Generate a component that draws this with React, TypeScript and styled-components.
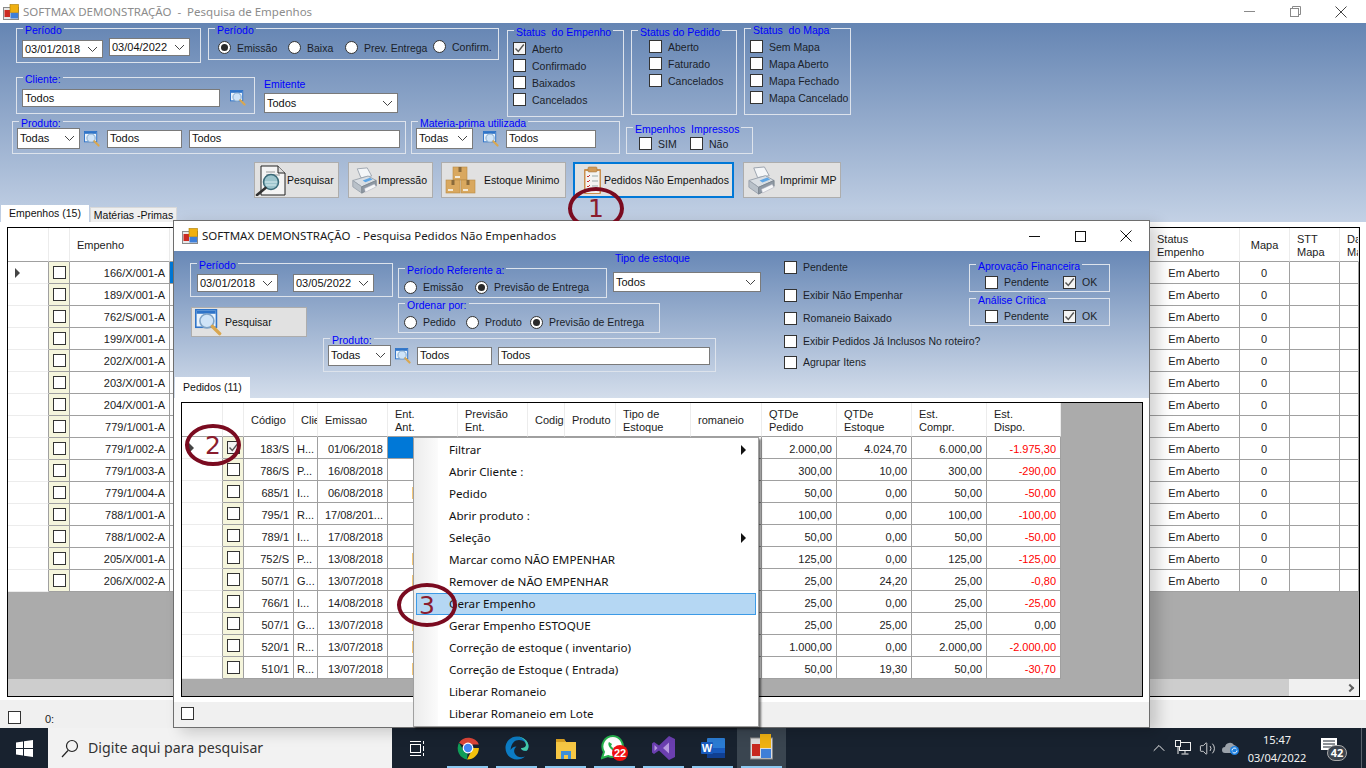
import React from "react";
import styled, { createGlobalStyle } from "styled-components";
import { ChevronUp, Volume2 } from "lucide-react";

const Global = createGlobalStyle`
  html, body { margin: 0; padding: 0; overflow: hidden; background: #fff; }
  * { box-sizing: border-box; }
  body { font: 11px/13px "Liberation Sans", Arial, sans-serif; color: #222; }
`;

const Screen = styled.div`position: relative; width: 1366px; height: 768px; overflow: hidden; display: flex; flex-direction: column;`;
const MainWindow = styled.div`height: 728px; display: flex; flex-direction: column; background: #fff;`;
const TitleBar = styled.div<{ $h: number; $inactive?: boolean }>`
  height: ${p => p.$h}px; flex: none; display: flex; align-items: center; background: #fff; position: relative; z-index: 2;
  padding-left: ${p => (p.$inactive ? 3 : 8)}px;
  color: ${p => (p.$inactive ? "#8c8c8c" : "#1a1a1a")};
`;
const TitleText = styled.span`font: 11.5px/16px "Noto Sans", sans-serif; white-space: pre; margin-left: 4px;`;
const WinControls = styled.div<{ $slot: number; $right: number }>`
  margin-left: auto; display: flex; margin-right: ${p => p.$right}px;
  & > span { width: ${p => p.$slot}px; display: flex; justify-content: center; align-items: center; }
`;
const Area = styled.div<{ $h: number; $from: string; $to: string }>`
  height: ${p => p.$h}px; flex: none; display: flex; flex-direction: column;
  background: linear-gradient(${p => p.$from}, ${p => p.$to});
`;
const Row = styled.div<{ $pl?: number; $mt?: number; $gap?: number; $h?: number }>`
  display: flex; align-items: flex-start; flex: none;
  padding-left: ${p => p.$pl ?? 0}px; margin-top: ${p => p.$mt ?? 0}px; gap: ${p => p.$gap ?? 0}px;
  ${p => (p.$h ? `height: ${p.$h}px;` : "")}
`;
const Col = styled.div<{ $w?: number; $mt?: number; $gap?: number }>`
  display: flex; flex-direction: column; flex: none;
  ${p => (p.$w ? `width: ${p.$w}px;` : "")}
  margin-top: ${p => p.$mt ?? 0}px; gap: ${p => p.$gap ?? 0}px;
`;
const Group = styled.fieldset<{ $w: number; $h: number; $pt?: number; $pl?: number; $mt?: number; $ml?: number }>`
  margin: ${p => p.$mt ?? 0}px 0 0 ${p => p.$ml ?? 0}px; min-width: 0; flex: none; width: ${p => p.$w}px; height: ${p => p.$h}px;
  padding: ${p => p.$pt ?? 0}px 0 0 0; border: 1px solid #dde3ec;
  & > :not(legend) { margin-left: ${p => p.$pl ?? 0}px; }
`;
const Legend = styled.legend`
  font-size: 10.5px; line-height: 13px; height: 13px; color: #0000ff; padding: 0 2px; margin-left: 6px; white-space: pre;
  transform: translateY(2px);
`;
const Inline = styled.div<{ $gap?: number; $lift?: boolean }>`
  display: flex; align-items: center; gap: ${p => p.$gap ?? 0}px;
  ${p => (p.$lift ? `& > label > span:first-child { transform: translateY(-1px); }` : "")}
`;
const Stack = styled.div<{ $gap: number }>`
  display: flex; flex-direction: column; gap: ${p => p.$gap}px;
  & > label > span:first-child { transform: translateY(-1px); }
`;
const Field = styled.div<{ $w: number; $h?: number; $mt?: number }>`
  flex: none; width: ${p => p.$w}px; height: ${p => p.$h ?? 18}px; margin-top: ${p => p.$mt ?? 0}px;
  background: #fff; border: 1px solid #7a7a7a; display: flex; align-items: center; padding: 0 4px 0 2px;
  color: #111; font-size: 11px; justify-content: space-between;
`;
const Box = styled.span<{ $checked?: boolean }>`
  width: 13px; height: 13px; flex: none; background: ${p => (p.$checked ? "#f4f4f4" : "#fff")}; border: 1px solid #333;
  display: inline-flex; align-items: center; justify-content: center;
`;
const Dot = styled.span<{ $on?: boolean }>`
  width: 13px; height: 13px; flex: none; border-radius: 50%; background: #fff; border: 1px solid #333; display: inline-flex; align-items: center; justify-content: center;
  &::after { content: ""; width: 7px; height: 7px; border-radius: 50%; background: ${p => (p.$on ? "#2a2a2a" : "transparent")}; }
`;
const Opt = styled.label<{ $w?: number; $gap?: number; $mt?: number }>`
  display: flex; align-items: center; flex: none; gap: ${p => p.$gap ?? 6}px; white-space: nowrap;
  ${p => (p.$w ? `width: ${p.$w}px;` : "")} margin-top: ${p => p.$mt ?? 0}px; color: #1b1f2a; font-size: 10.5px;
`;
const PlainLabel = styled.div<{ $ml?: number }>`color: #0000ff; font-size: 10.5px; line-height: 13px; margin-left: ${p => p.$ml ?? 0}px;`;
const Btn = styled.div<{ $w: number; $h?: number; $pl: number; $gap: number; $ml?: number; $focus?: boolean }>`
  width: ${p => p.$w}px; height: ${p => p.$h ?? 36}px; flex: none; display: flex; align-items: center;
  background: #e1e1e1; color: #111; white-space: nowrap; font-size: 10.5px; margin-left: ${p => p.$ml ?? 0}px;
  border: ${p => (p.$focus ? "2px solid #0078d7" : "1px solid #adadad")};
  padding-left: ${p => p.$pl}px; gap: ${p => p.$gap}px;
`;
const TabStrip = styled.div<{ $pl: number }>`margin-top: auto; display: flex; align-items: flex-end; padding-left: ${p => p.$pl}px; height: 21px; flex: none;`;
const Tab = styled.div<{ $w: number; $active?: boolean; $h: number; $ml?: number }>`
  width: ${p => p.$w}px; height: ${p => p.$h}px; display: flex; align-items: center; justify-content: center; white-space: nowrap;
  background: ${p => (p.$active ? "#fff" : "#efefef")}; color: #111; font-size: 10.5px; margin-left: ${p => p.$ml ?? 0}px;
  border: ${p => (p.$active ? "0" : "1px solid #d9d9d9")}; border-bottom: 0;
`;
const Panel = styled.div<{ $pad: string }>`flex: 1; min-height: 0; background: #fff; padding: ${p => p.$pad}; display: flex;`;
const GridFrame = styled.div`flex: 1; border: 1px solid #000; background: #ababab; display: flex; flex-direction: column; min-width: 0; overflow: hidden;`;
const Table = styled.div<{ $cols: string; $hh: number }>`
  display: grid; grid-template-columns: ${p => p.$cols}; grid-auto-rows: 22px; grid-template-rows: ${p => p.$hh}px; flex: none;
`;
const Head = styled.div<{ $center?: boolean }>`
  background: #fff; border-right: 1px solid #ececec; border-bottom: 1px solid #a0a0a0; display: flex; align-items: center;
  padding: 2px 0 0 ${p => (p.$center ? 0 : 7)}px; justify-content: ${p => (p.$center ? "center" : "flex-start")};
  overflow: hidden; white-space: nowrap; color: #1c1c1c; line-height: 13px; font-size: 11px;
`;
const RowHead = styled.div`
  background: #fff; border-right: 1px solid #a0a0a0; border-bottom: 1px solid #ececec; display: flex; align-items: center; padding-left: 7px;
`;
const Cell = styled.div<{ $align?: string; $red?: boolean; $bg?: string }>`
  background: ${p => p.$bg ?? "#fff"}; border-right: 1px solid #a0a0a0; border-bottom: 1px solid #a0a0a0;
  display: flex; align-items: center; overflow: hidden; white-space: nowrap; padding: 3px 4px 0 3px;
  justify-content: ${p => p.$align ?? "flex-end"}; color: ${p => (p.$red ? "#ff0000" : "#222")}; font-size: 11px;
`;
const MainCell = styled(Cell)`padding-top: 1px;`;
const CheckCell = styled(Cell)`background: #f5f5dc; justify-content: center; padding: 0;`;
const Caret = styled.span<{ $c?: string }>`
  width: 0; height: 0; border-left: 5px solid ${p => p.$c ?? "#444"}; border-top: 5px solid transparent; border-bottom: 5px solid transparent;
`;
const Mark = styled.span`width: 3px; height: 12px; background: #f6c878; margin-left: 21px;`;
const GridFill = styled.div`flex: 1;`;
const HScroll = styled.div`height: 17px; flex: none; background: #f0f0f0; display: flex; align-items: center; justify-content: flex-end; position: relative;`;
const HThumb = styled.div`position: absolute; left: 0; top: 0; bottom: 0; width: 1281px; background: #cdcdcd;`;
const ScrollArrow = styled.span`
  margin-right: 6px; width: 6px; height: 6px; border-top: 2px solid #606060; border-right: 2px solid #606060; transform: rotate(45deg);
`;
const StatusBar = styled.div<{ $h: number; $pl: number; $pt: number }>`
  height: ${p => p.$h}px; flex: none; background: #f0f0f0; display: flex; align-items: flex-start; padding: ${p => p.$pt}px 0 0 ${p => p.$pl}px;
`;
const ZeroLabel = styled.span`margin: 2px 0 0 24px;`;
const Dialog = styled.div`
  position: absolute; left: 173px; top: 220px; width: 977px; height: 508px; background: #fff; border: 1px solid #6e6e6e;
  display: flex; flex-direction: column; box-shadow: 8px 4px 14px rgba(0,0,0,.18);
`;
const Menu = styled.div`
  position: absolute; left: 413px; top: 437px; width: 346px; height: 290px; border: 1px solid #a0a0a0; padding: 1px 1px 0;
  background: linear-gradient(to right, #ececec, #fbfbfb 24px, #fff 24px); box-shadow: 2px 2px 2px rgba(0,0,0,.55);
  display: flex; flex-direction: column;
`;
const MenuItem = styled.div<{ $on?: boolean }>`
  height: 22px; flex: none; margin: 0 1px; padding: 0 10px 0 33px; display: flex; align-items: center; justify-content: space-between;
  font: 11.65px/16px "Noto Sans", sans-serif; color: #111; white-space: nowrap;
  background: ${p => (p.$on ? "#b5d7f3" : "transparent")}; outline: ${p => (p.$on ? "1px solid #3c9ae6" : "none")}; outline-offset: -1px;
`;
const Ring = styled.div<{ $l: number; $t: number; $w: number; $h: number }>`
  position: absolute; left: ${p => p.$l}px; top: ${p => p.$t}px; width: ${p => p.$w}px; height: ${p => p.$h}px;
  border: 4px solid #7a0b20; border-radius: 50%; display: flex; align-items: center; justify-content: center;
  font: 25px/25px "DejaVu Sans", sans-serif; color: #8a1c2e;
`;
const Taskbar = styled.div`height: 40px; flex: none; background: #18222f; display: flex; align-items: stretch; color: #fff;`;
const Center = styled.div<{ $w: number; $bg?: string; $open?: boolean }>`
  width: ${p => p.$w}px; flex: none; display: flex; align-items: center; justify-content: center; position: relative;
  background: ${p => p.$bg ?? "transparent"};
  ${p => (p.$open ? `&::after { content: ""; position: absolute; left: 4px; right: 4px; bottom: 0; height: 2px; background: #8cc8f0; }` : "")}
`;
const SearchBox = styled.div`
  width: 344px; flex: none; background: #f2f2f2; display: flex; align-items: center; padding-left: 13px; gap: 9px; color: #333;
  font: 14.2px/18px "Noto Sans", sans-serif;
`;
const Spacer = styled.div`flex: 1;`;
const Clock = styled.div`
  width: 70px; flex: none; display: flex; flex-direction: column; align-items: center; justify-content: center; gap: 3px;
  font: 11px/15px "Noto Sans", sans-serif; color: #f2f2f2;
`;
const Badge = styled.div`
  position: absolute; left: 15px; top: 17px; width: 20px; height: 16px; border-radius: 9px; background: #3c444e; border: 1px solid #aaa;
  font: bold 11px/14px "Noto Sans", sans-serif; color: #fff; text-align: center;
`;
const EdgeLine = styled.div`width: 12px; flex: none; display: flex; justify-content: flex-start; padding-left: 7px; &::after { content: ""; width: 1px; background: #5a626c; }`;
const LensSlot = styled.span<{ $ml?: number }>`display: inline-flex; flex: none; margin-left: ${p => p.$ml ?? 0}px;`;

const Chevron = () => (
  <svg width="11" height="7" viewBox="0 0 11 7"><path d="M1 1l4.5 4.5L10 1" fill="none" stroke="#444" strokeWidth="1" /></svg>
);
const Tick = () => (
  <svg width="11" height="11" viewBox="0 0 11 11"><path d="M1.5 5.5l2.8 3L9.8 1.5" fill="none" stroke="#555" strokeWidth="1.4" /></svg>
);
const AppIcon = ({ s = 16 }: { s?: number }) => (
  <svg width={s} height={s} viewBox="0 0 16 16">
    <rect x="0.5" y="3.5" width="15" height="12" fill="#e8e8e8" stroke="#8a8a8a" />
    <rect x="1.5" y="6" width="5.5" height="7" fill="#cc2a22" />
    <rect x="7" y="0.5" width="8.5" height="8" fill="#f0b010" stroke="#a87a00" strokeWidth=".6" />
    <rect x="7.5" y="9" width="7.5" height="5.5" fill="#3f7fd8" />
  </svg>
);
const Lens = ({ w = 17 }: { w?: number }) => (
  <svg width={w} height={w} viewBox="0 0 17 17" style={{ flex: "none" }}>
    <rect x="0.5" y="0.5" width="13" height="11" fill="#eaf3fc" stroke="#2f74c8" />
    <rect x="1" y="1" width="12" height="2" fill="#2f74c8" />
    <circle cx="7.5" cy="7.5" r="4.4" fill="#cfe4f8" stroke="#7fa3c6" />
    <path d="M11 11l4.5 4.5" stroke="#d9a750" strokeWidth="2.2" strokeLinecap="round" />
  </svg>
);
const DocLens = () => (
  <svg width="32" height="31" viewBox="0 0 32 31" style={{ flex: "none" }}>
    <path d="M6 1h17l7 7v22H6z" fill="#f4f4f4" stroke="#222" />
    <path d="M23 1v7h7" fill="#ddd" stroke="#222" />
    <path d="M11 7h9M11 10h14" stroke="#999" />
    <circle cx="16" cy="17" r="7.5" fill="#9cc4cc" stroke="#3a6a78" strokeWidth="1.5" />
    <path d="M10 17h12M11 20h10" stroke="#d8edf0" />
    <path d="M10.5 23L2 30" stroke="#333" strokeWidth="2.6" strokeLinecap="round" />
  </svg>
);
const Printer = ({ w = 27 }: { w?: number }) => (
  <svg width={w} height={w} viewBox="0 0 30 30" style={{ flex: "none" }}>
    <path d="M7 2l11-1 5 9-12 2z" fill="#f4f6f8" stroke="#9aa3ad" />
    <path d="M2 15l17-5 9 5-16 7z" fill="#d9dee3" stroke="#9aa3ad" />
    <path d="M2 15v7l10 7V22z" fill="#b9c1c9" stroke="#9aa3ad" />
    <path d="M12 22l16-7v6l-16 8z" fill="#8f99a4" stroke="#7c8690" />
    <path d="M13 15l8-3 3 2-8 3z" fill="#5ea6e6" />
    <path d="M15 24l11-5 2 3-12 6z" fill="#f6f7f8" stroke="#aab" strokeWidth=".5" />
  </svg>
);
const BoxOne = ({ x, y }: { x: number; y: number }) => (
  <g transform={`translate(${x} ${y})`}>
    <rect width="14" height="13" fill="#d9a85f" stroke="#b88a45" strokeWidth=".6" />
    <rect x="5.5" width="3" height="5" fill="#8a6a3b" />
    <rect x="2" y="9" width="5" height="2" fill="#f3ead8" />
  </g>
);
const Boxes = () => (
  <svg width="31" height="28" viewBox="0 0 31 28" style={{ flex: "none" }}><BoxOne x={8} y={1} /><BoxOne x={1} y={14} /><BoxOne x={16} y={14} /></svg>
);
const Clipboard = () => (
  <svg width="19" height="30" viewBox="0 0 19 30" style={{ flex: "none" }}>
    <rect x="1" y="4" width="17" height="25" rx="1" fill="#c98f4f" />
    <rect x="2.5" y="6" width="14" height="22" fill="#f4f4f2" />
    <rect x="5" y="2" width="9" height="5" rx="1" fill="#d09a58" stroke="#9c6f38" strokeWidth=".5" />
    <path d="M4 11l1 1 2-2M4 16l1 1 2-2M4 21l1 1 2-2" fill="none" stroke="#cc3030" />
    <path d="M9 11h6M9 16h6M9 21h6M4 25h11" stroke="#9aa" />
  </svg>
);
const WinLogo = () => (
  <svg width="17" height="17" viewBox="0 0 17 17" fill="#fff"><path d="M0 2.4l7-1v6.7H0zM8 1.2L17 0v8.1H8zM0 9h7v6.6l-7-1zM8 9h9v8l-9-1.3z" /></svg>
);
const SearchGlass = () => (
  <svg width="18" height="19" viewBox="0 0 18 19" fill="none" stroke="#222" strokeWidth="1.2"><circle cx="11" cy="7" r="5.5" /><path d="M7 11.5L1 18" /></svg>
);
const TaskView = () => (
  <svg width="16" height="17" viewBox="0 0 16 17" fill="none" stroke="#fff"><rect x=".5" y="4.5" width="10" height="8" /><path d="M0 1.5h11M0 15.5h11M13.5 1v3M13.5 6v5M13.5 13v3" /></svg>
);
const Chrome = () => (
  <svg width="24" height="24" viewBox="0 0 24 24">
    <path d="M12 12L3 6.8A11.5 11.5 0 0 1 22.9 8.5H12z" fill="#db4437" />
    <path d="M12 12H22.9A11.5 11.5 0 0 1 11 23.5L17 12z" fill="#f4c20d" />
    <path d="M12 12l-1 11.5A11.5 11.5 0 0 1 3 6.8l6 10z" fill="#0f9d58" />
    <circle cx="12" cy="12" r="5.4" fill="#fff" /><circle cx="12" cy="12" r="4.2" fill="#4285f4" />
  </svg>
);
const Edge = () => (
  <svg width="24" height="24" viewBox="0 0 24 24">
    <path d="M12 .5A11.5 11.5 0 0 0 .5 12c0 6.5 5 11.5 11.5 11.5 3.4 0 6-1.2 8-3-4 1.6-9 .5-10.5-3.5-.9-2.5 0-5 2-6.5-3 0-5 1.6-6 3.5C6.5 7 9.5 4 14 4c5 0 7 3 7 5 0 2-2 3-4 3h-1c0 2 3 3.5 6 2.5 1-1 1.5-3 1.5-4.5C23.5 5 18 .5 12 .5z" fill="#0c7cc4" />
    <path d="M21 9c0 2-2 3-4 3h-1c0 2 3 3.5 6 2.5 1-1 1.5-3 1.5-4.5C23.5 5 18 .5 12 .5c4 0 9 3.5 9 8.5z" fill="#45c9a5" />
  </svg>
);
const Folder = () => (
  <svg width="22" height="24" viewBox="0 0 22 24">
    <path d="M1 3h8l2 3h10v17H1z" fill="#f6c744" /><path d="M1 3h8l2 3H1z" fill="#d9a020" />
    <path d="M6 23v-8h10v8h-3v-4H9v4z" fill="#3f8fd8" />
  </svg>
);
const Whatsapp = () => (
  <svg width="28" height="27" viewBox="0 0 28 27">
    <path d="M12 1a10.5 10.5 0 0 0-9 16L1 23l6-2a10.5 10.5 0 1 0 5-20z" fill="#fff" stroke="#25b14c" strokeWidth="2" />
    <path d="M8 7c-1.5 2 0 5 2 7s5 4 7 2l-2-3-2 1-3-3 1-2z" fill="#25b14c" />
    <circle cx="19" cy="18" r="8" fill="#f01010" />
    <text x="19" y="22" textAnchor="middle" fontFamily="Liberation Sans" fontSize="11" fontWeight="bold" fill="#fff">22</text>
  </svg>
);
const VS = () => (
  <svg width="24" height="24" viewBox="0 0 24 24">
    <path d="M17 0l6 3v18l-6 3-10-9.5L2 18l-2-1.5V7.5L2 6l5 3.5z" fill="#6b3fb0" />
    <path d="M17 6.5L11 12l6 5.5zM2.5 9v6l3-3z" fill="#b79ae0" />
  </svg>
);
const Word = () => (
  <svg width="24" height="24" viewBox="0 0 24 24">
    <rect x="6" y="2" width="18" height="20" rx="1" fill="#2b7cd3" /><rect x="6" y="12" width="18" height="5" fill="#185abd" /><rect x="6" y="17" width="18" height="5" fill="#103f91" />
    <rect x="0" y="6" width="12" height="12" rx="1" fill="#185abd" />
    <text x="6" y="16" textAnchor="middle" fontFamily="Liberation Sans" fontSize="11" fontWeight="bold" fill="#fff">W</text>
  </svg>
);
const Softmax = () => (
  <svg width="24" height="30" viewBox="0 0 24 30">
    <rect x=".5" y="5" width="22" height="21" fill="#dcdcdc" stroke="#888" />
    <rect x="2" y="11" width="8" height="12" fill="#c8281e" /><rect x="10" y="1" width="11" height="14" fill="#efb112" /><rect x="11" y="16" width="10" height="9" fill="#3f7fd8" />
  </svg>
);
const Network = () => (
  <svg width="16" height="16" viewBox="0 0 16 16" fill="none" stroke="#eee"><rect x="4.5" y="2.5" width="11" height="8" /><path d="M10 10.5v3M6.5 14h7" /><rect x=".5" y=".5" width="5" height="6" fill="#18222f" /><path d="M3 7v7" /></svg>
);
const CloudSync = () => (
  <svg width="18" height="14" viewBox="0 0 18 14">
    <path d="M3 12a3 3 0 0 1 0-6 5 5 0 0 1 9-2 4 4 0 0 1 3 4v4z" fill="#9aa1a9" />
    <circle cx="12.5" cy="9.5" r="4.5" fill="#1c7fe0" /><path d="M10 9.5a2.5 2.5 0 0 1 4.5-1.5M15 9.5a2.5 2.5 0 0 1-4.5 1.5" stroke="#fff" fill="none" />
  </svg>
);
const MinIcon = ({ c }: { c: string }) => <svg width="11" height="11" viewBox="0 0 11 11"><path d="M0 5.5h11" stroke={c} /></svg>;
const MaxIcon = ({ c }: { c: string }) => <svg width="11" height="11" viewBox="0 0 11 11"><rect x=".5" y=".5" width="10" height="10" fill="none" stroke={c} /></svg>;
const RestoreIcon = ({ c }: { c: string }) => <svg width="11" height="11" viewBox="0 0 11 11" fill="none" stroke={c}><rect x=".5" y="2.5" width="8" height="8" /><path d="M2.5 2.5v-2h8v8h-2" /></svg>;
const CloseIcon = ({ c }: { c: string }) => <svg width="12" height="12" viewBox="0 0 12 12"><path d="M.5.5l11 11M11.5.5l-11 11" stroke={c} /></svg>;

const empenhos = ["166/X/001-A","189/X/001-A","762/S/001-A","199/X/001-A","202/X/001-A","203/X/001-A","204/X/001-A","779/1/001-A","779/1/002-A","779/1/003-A","779/1/004-A","788/1/001-A","788/1/002-A","205/X/001-A","206/X/002-A"];
const pedidos: [string,string,string,string,string,string,string,boolean][] = [
  ["183/S","H...","01/06/2018","2.000,00","4.024,70","6.000,00","-1.975,30",false],
  ["786/S","P...","16/08/2018","300,00","10,00","300,00","-290,00",false],
  ["685/1","I...","06/08/2018","50,00","0,00","50,00","-50,00",true],
  ["795/1","R...","17/08/201...","100,00","0,00","100,00","-100,00",false],
  ["789/1","I...","17/08/2018","50,00","0,00","50,00","-50,00",false],
  ["752/S","P...","13/08/2018","125,00","0,00","125,00","-125,00",true],
  ["507/1","G...","13/07/2018","25,00","24,20","25,00","-0,80",true],
  ["766/1","I...","14/08/2018","25,00","0,00","25,00","-25,00",false],
  ["507/1","G...","13/07/2018","25,00","25,00","25,00","0,00",true],
  ["520/1","R...","13/07/2018","1.000,00","0,00","2.000,00","-2.000,00",true],
  ["510/1","R...","13/07/2018","50,00","19,30","50,00","-30,70",true],
];
const menuItems = ["Filtrar","Abrir Cliente :","Pedido","Abrir produto :","Seleção","Marcar como NÃO EMPENHAR","Remover de NÃO EMPENHAR","Gerar Empenho","Gerar Empenho ESTOQUE","Correção de estoque ( inventario)","Correção de Estoque ( Entrada)","Liberar Romaneio","Liberar Romaneio em Lote"];

const MainGrid = () => (
  <GridFrame>
    <Table $cols="41px 21px 100px 980px 90px 50px 50px 19px" $hh={34}>
      <Head /><Head /><Head>Empenho</Head><Head /><Head>Status<br />Empenho</Head>
      <Head $center>Mapa</Head><Head>STT<br />Mapa</Head><Head>Da<br />Ma</Head>
      {empenhos.map((e, i) => (
        <React.Fragment key={e}>
          <RowHead>{i === 0 && <Caret />}</RowHead>
          <CheckCell><Box /></CheckCell>
          <MainCell>{e}</MainCell>
          <MainCell $bg={i === 0 ? "#0078d7" : "#fff"} />
          <MainCell $align="center">Em Aberto</MainCell>
          <MainCell $align="center">0</MainCell>
          <MainCell /><MainCell />
        </React.Fragment>
      ))}
    </Table>
    <GridFill />
    <HScroll><HThumb /><ScrollArrow /></HScroll>
  </GridFrame>
);

const DialogGrid = () => (
  <GridFrame>
    <Table $cols="41px 21px 50px 24px 70px 70px 70px 37px 51px 75px 71px 75px 75px 75px 74px" $hh={34}>
      <Head /><Head /><Head>Código</Head><Head>Clie</Head><Head>Emissao</Head><Head>Ent.<br />Ant.</Head><Head>Previsão<br />Ent.</Head>
      <Head>Codig</Head><Head>Produto</Head><Head>Tipo de<br />Estoque</Head><Head>romaneio</Head><Head>QTDe<br />Pedido</Head><Head>QTDe<br />Estoque</Head><Head>Est.<br />Compr.</Head><Head>Est.<br />Dispo.</Head>
      {pedidos.map((r, i) => (
        <React.Fragment key={i}>
          <RowHead>{i === 0 && <Caret />}</RowHead>
          <CheckCell><Box $checked={i === 0}>{i === 0 && <Tick />}</Box></CheckCell>
          <Cell>{r[0]}</Cell>
          <Cell $align="flex-start">{r[1]}</Cell>
          <Cell>{r[2]}</Cell>
          <Cell $bg={i === 0 ? "#0078d7" : "#fff"} $align="flex-start">{r[7] && <Mark />}</Cell>
          <Cell /><Cell /><Cell /><Cell /><Cell />
          <Cell>{r[3]}</Cell><Cell>{r[4]}</Cell><Cell>{r[5]}</Cell>
          <Cell $red={r[6].startsWith("-")}>{r[6]}</Cell>
        </React.Fragment>
      ))}
    </Table>
  </GridFrame>
);

export default function App() {
  return (
    <Screen>
      <Global />
      <MainWindow>
        <TitleBar $h={23} $inactive>
          <AppIcon />
          <TitleText>SOFTMAX DEMONSTRAÇÃO  -  Pesquisa de Empenhos</TitleText>
          <WinControls $slot={46} $right={2}>
            <span><MinIcon c="#8a8a8a" /></span><span><RestoreIcon c="#8a8a8a" /></span><span><CloseIcon c="#444" /></span>
          </WinControls>
        </TitleBar>
        <Area $h={199} $from="#6585b3" $to="#c3d1e5">
          <Row $pl={16} $mt={-1} $h={94}>
            <Col $w={491}>
              <Row $gap={7}>
                <Group $w={185} $h={41} $pt={3} $pl={5}>
                  <Legend>Período</Legend>
                  <Row $gap={6}>
                    <Field $w={81} $mt={2}>03/01/2018<Chevron /></Field>
                    <Field $w={81}>03/04/2022<Chevron /></Field>
                  </Row>
                </Group>
                <Group $w={291} $h={38} $pt={7} $pl={9}>
                  <Legend>Período</Legend>
                  <Inline $lift>
                    <Opt $w={70}><Dot $on />Emissão</Opt>
                    <Opt $w={57}><Dot />Baixa</Opt>
                    <Opt $w={88}><Dot />Prev. Entrega</Opt>
                    <Opt $mt={-2}><Dot />Confirm.</Opt>
                  </Inline>
                </Group>
              </Row>
              <Row $mt={8} $gap={9}>
                <Group $w={239} $h={43} $pt={5} $pl={5}>
                  <Legend>Cliente:</Legend>
                  <Inline $gap={10}>
                    <Field $w={198}>Todos</Field>
                    <Lens w={16} />
                  </Inline>
                </Group>
                <Col $mt={7} $gap={2}>
                  <PlainLabel>Emitente</PlainLabel>
                  <Field $w={134} $h={20}>Todos<Chevron /></Field>
                </Col>
              </Row>
            </Col>
            <Row $gap={7} $mt={2}>
              <Group $w={117} $h={93} $pt={6} $pl={5}>
                <Legend>Status  do Empenho</Legend>
                <Stack $gap={4}>
                  <Opt><Box $checked><Tick /></Box>Aberto</Opt>
                  <Opt><Box />Confirmado</Opt>
                  <Opt><Box />Baixados</Opt>
                  <Opt><Box />Cancelados</Opt>
                </Stack>
              </Group>
              <Group $w={106} $h={91} $pt={4} $pl={17}>
                <Legend>Status do Pedido</Legend>
                <Stack $gap={4}>
                  <Opt><Box />Aberto</Opt>
                  <Opt><Box />Faturado</Opt>
                  <Opt><Box />Cancelados</Opt>
                </Stack>
              </Group>
              <Group $w={107} $h={93} $mt={-2} $pt={6} $pl={5}>
                <Legend>Status  do Mapa</Legend>
                <Stack $gap={4}>
                  <Opt><Box />Sem Mapa</Opt>
                  <Opt><Box />Mapa Aberto</Opt>
                  <Opt><Box />Mapa Fechado</Opt>
                  <Opt><Box />Mapa Cancelado</Opt>
                </Stack>
              </Group>
            </Row>
          </Row>
          <Row $pl={12} $mt={-1} $h={39}>
            <Group $w={394} $h={39} $pl={4}>
              <Legend>Produto:</Legend>
              <Inline $gap={7}>
                <Field $w={63} $h={21}>Todas<Chevron /></Field>
                <LensSlot $ml={-3}><Lens w={16} /></LensSlot>
                <Field $w={75}>Todos</Field>
                <Field $w={211}>Todos</Field>
              </Inline>
            </Group>
            <Group $w={209} $h={39} $pl={4} $ml={5}>
              <Legend>Materia-prima utilizada</Legend>
              <Inline $gap={7}>
                <Field $w={57} $h={21}>Todas<Chevron /></Field>
                <LensSlot $ml={3}><Lens w={16} /></LensSlot>
                <Field $w={90}>Todos</Field>
              </Inline>
            </Group>
            <Group $w={127} $h={33} $mt={6} $pt={4} $pl={12} $ml={6}>
              <Legend>Empenhos  Impressos</Legend>
              <Inline $lift>
                <Opt $w={51}><Box />SIM</Opt>
                <Opt><Box />Não</Opt>
              </Inline>
            </Group>
          </Row>
          <Row $pl={254} $mt={8}>
            <Btn $w={85} $pl={0} $gap={0}><DocLens />Pesquisar</Btn>
            <Btn $w={85} $pl={2} $gap={0} $ml={9}><Printer />Impressão</Btn>
            <Btn $w={125} $pl={3} $gap={8} $ml={8}><Boxes />Estoque Minimo</Btn>
            <Btn $w={161} $pl={8} $gap={2} $ml={7} $focus><Clipboard />Pedidos Não Empenhados</Btn>
            <Btn $w={98} $pl={3} $gap={4} $ml={9}><Printer w={29} />Imprimir MP</Btn>
          </Row>
          <TabStrip $pl={1}>
            <Tab $w={88} $h={17} $active>Empenhos (15)</Tab>
            <Tab $w={87} $h={15} $ml={1}>Matérias -Primas</Tab>
          </TabStrip>
        </Area>
        <Panel $pad="5px 6px 3px 7px"><MainGrid /></Panel>
        <StatusBar $h={28} $pl={8} $pt={11}>
          <Box /><ZeroLabel>0:</ZeroLabel>
        </StatusBar>
      </MainWindow>
      <Taskbar>
        <Center $w={48}><WinLogo /></Center>
        <SearchBox><SearchGlass />Digite aqui para pesquisar</SearchBox>
        <Center $w={51}><TaskView /></Center>
        <Center $w={49} $open><Chrome /></Center>
        <Center $w={49} $open><Edge /></Center>
        <Center $w={49} $open><Folder /></Center>
        <Center $w={49} $open><Whatsapp /></Center>
        <Center $w={49} $open><VS /></Center>
        <Center $w={49} $open><Word /></Center>
        <Center $w={49} $open $bg="#3a4550"><Softmax /></Center>
        <Spacer />
        <Center $w={22}><ChevronUp size={20} color="#eee" strokeWidth={1.2} /></Center>
        <Center $w={25}><Network /></Center>
        <Center $w={24}><Volume2 size={17} color="#eee" strokeWidth={1.2} /></Center>
        <Center $w={23}><CloudSync /></Center>
        <Clock><span>15:47</span><span>03/04/2022</span></Clock>
        <Center $w={42}>
          <svg width="16" height="14" viewBox="0 0 16 14" style={{ marginBottom: 6, marginRight: 8 }}><path d="M0 0h16v12H0z" fill="#fff" /><path d="M2 3h12M2 6h12M2 9h8" stroke="#18222f" /></svg>
          <Badge>42</Badge>
        </Center>
        <EdgeLine />
      </Taskbar>

      <Dialog>
        <TitleBar $h={30}>
          <AppIcon />
          <TitleText>SOFTMAX DEMONSTRAÇÃO  - Pesquisa Pedidos Não Empenhados</TitleText>
          <WinControls $slot={46} $right={0}>
            <span><MinIcon c="#111" /></span><span><MaxIcon c="#111" /></span><span><CloseIcon c="#111" /></span>
          </WinControls>
        </TitleBar>
        <Area $h={147} $from="#6888b6" $to="#d3ddeb">
          <Row $pl={16} $mt={6}>
            <Col $w={594}>
              <Row $h={75}>
                <Col $w={208}>
                  <Group $w={203} $h={40} $pt={4} $pl={6}>
                    <Legend>Período</Legend>
                    <Inline $gap={15}>
                      <Field $w={81}>03/01/2018<Chevron /></Field>
                      <Field $w={81}>03/05/2022<Chevron /></Field>
                    </Inline>
                  </Group>
                  <Btn $w={116} $h={30} $pl={3} $gap={3} $ml={1} style={{ marginTop: 10 }}>
                    <Lens w={27} />Pesquisar
                  </Btn>
                </Col>
                <Col>
                  <Row $gap={6} $mt={5}>
                    <Group $w={209} $h={36} $pt={6} $pl={5}>
                      <Legend>Período Referente a:</Legend>
                      <Inline>
                        <Opt $w={71}><Dot />Emissão</Opt>
                        <Opt><Dot $on />Previsão de Entrega</Opt>
                      </Inline>
                    </Group>
                    <Col $mt={-10} $gap={7}>
                      <PlainLabel $ml={2}>Tipo de estoque</PlainLabel>
                      <Field $w={148} $h={20}>Todos<Chevron /></Field>
                    </Col>
                  </Row>
                  <Group $w={262} $h={36} $mt={-1} $pt={6} $pl={5}>
                    <Legend>Ordenar por:</Legend>
                    <Inline>
                      <Opt $w={62}><Dot />Pedido</Opt>
                      <Opt $w={64}><Dot />Produto</Opt>
                      <Opt><Dot $on />Previsão de Entrega</Opt>
                    </Inline>
                  </Group>
                </Col>
              </Row>
              <Row $pl={133}>
                <Group $w={393} $h={40} $pl={4}>
                  <Legend>Produto:</Legend>
                  <Inline $gap={6}>
                    <Field $w={63} $h={21}>Todas<Chevron /></Field>
                    <LensSlot $ml={-2}><Lens w={16} /></LensSlot>
                    <Field $w={75}>Todos</Field>
                    <Field $w={212}>Todos</Field>
                  </Inline>
                </Group>
              </Row>
            </Col>
            <Col $w={185}>
              <Opt $mt={4}><Box />Pendente</Opt>
              <Opt $mt={15}><Box />Exibir Não Empenhar</Opt>
              <Opt $mt={10}><Box />Romaneio Baixado</Opt>
              <Opt $mt={10}><Box />Exibir Pedidos Já Inclusos No roteiro?</Opt>
              <Opt $mt={8}><Box />Agrupar Itens</Opt>
            </Col>
            <Col $mt={1}>
              <Group $w={141} $h={34} $pt={5} $pl={15}>
                <Legend>Aprovação Financeira</Legend>
                <Inline>
                  <Opt $w={78}><Box />Pendente</Opt>
                  <Opt><Box $checked><Tick /></Box>OK</Opt>
                </Inline>
              </Group>
              <Group $w={141} $h={34} $pt={5} $pl={15}>
                <Legend>Análise Crítica</Legend>
                <Inline>
                  <Opt $w={78}><Box />Pendente</Opt>
                  <Opt><Box $checked><Tick /></Box>OK</Opt>
                </Inline>
              </Group>
            </Col>
          </Row>
          <TabStrip $pl={1}><Tab $w={75} $h={21} $active>Pedidos (11)</Tab></TabStrip>
        </Area>
        <Panel $pad="4px 6px 5px 7px"><DialogGrid /></Panel>
        <StatusBar $h={25} $pl={7} $pt={5}><Box /></StatusBar>
      </Dialog>

      <Menu>
        {menuItems.map(m => (
          <MenuItem key={m} $on={m === "Gerar Empenho"}>
            {m}
            {(m === "Filtrar" || m === "Seleção") && <Caret $c="#111" />}
          </MenuItem>
        ))}
      </Menu>

      <Ring $l={568} $t={187} $w={56} $h={43}>1</Ring>
      <Ring $l={185} $t={424} $w={56} $h={42}>2</Ring>
      <Ring $l={397} $t={583} $w={60} $h={44}>3</Ring>
    </Screen>
  );
}
